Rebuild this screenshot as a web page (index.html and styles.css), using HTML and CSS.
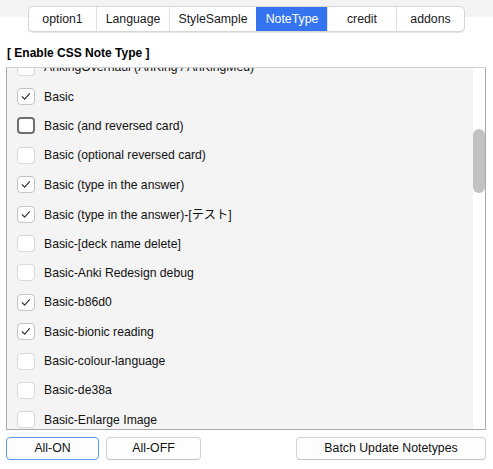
FILE: index.html
```html
<!DOCTYPE html>
<html>
<head>
<meta charset="utf-8">
<link rel="stylesheet" href="styles.css">
</head>
<body>
<div class="header">
  <div class="tabs">
    <div class="tab w1">option1</div>
    <div class="tab w2">Language</div>
    <div class="tab w3">StyleSample</div>
    <div class="tab w4 active">NoteType</div>
    <div class="tab w5">credit</div>
    <div class="tab w6">addons</div>
  </div>
</div>
<div class="title">[ Enable CSS Note Type ]</div>
<div class="listbox">
  <div class="items">
    <div class="inner">
      <div class="row"><span class="cb"></span><span>AnkingOverhaul (AnKing / AnKingMed)</span></div>
      <div class="row"><span class="cb on"><svg viewBox="0 0 18 18"><polyline points="4.5,9.3 7.4,12.2 13.2,5.6"/></svg></span><span>Basic</span></div>
      <div class="row"><span class="cb focus"></span><span>Basic (and reversed card)</span></div>
      <div class="row"><span class="cb"></span><span>Basic (optional reversed card)</span></div>
      <div class="row"><span class="cb on"><svg viewBox="0 0 18 18"><polyline points="4.5,9.3 7.4,12.2 13.2,5.6"/></svg></span><span>Basic (type in the answer)</span></div>
      <div class="row"><span class="cb on"><svg viewBox="0 0 18 18"><polyline points="4.5,9.3 7.4,12.2 13.2,5.6"/></svg></span><span>Basic (type in the answer)-[テスト]</span></div>
      <div class="row"><span class="cb"></span><span>Basic-[deck name delete]</span></div>
      <div class="row"><span class="cb"></span><span>Basic-Anki Redesign debug</span></div>
      <div class="row"><span class="cb on"><svg viewBox="0 0 18 18"><polyline points="4.5,9.3 7.4,12.2 13.2,5.6"/></svg></span><span>Basic-b86d0</span></div>
      <div class="row"><span class="cb on"><svg viewBox="0 0 18 18"><polyline points="4.5,9.3 7.4,12.2 13.2,5.6"/></svg></span><span>Basic-bionic reading</span></div>
      <div class="row"><span class="cb"></span><span>Basic-colour-language</span></div>
      <div class="row"><span class="cb"></span><span>Basic-de38a</span></div>
      <div class="row"><span class="cb"></span><span>Basic-Enlarge Image</span></div>
    </div>
  </div>
  <div class="track"><div class="thumb"></div></div>
</div>
<div class="buttons">
  <button class="btn b-on">All-ON</button>
  <button class="btn b-off">All-OFF</button>
  <span class="spacer"></span>
  <button class="btn b-batch">Batch Update Notetypes</button>
</div>
</body>
</html>
```
FILE: styles.css
```css
html, body {
  margin: 0;
  padding: 0;
  background: #ffffff;
}
body {
  width: 493px;
  height: 469px;
  overflow: hidden;
  font-family: "Liberation Sans", "Noto Sans CJK JP", sans-serif;
  font-size: 12px;
  color: #111111;
}
.header {
  height: 32px;
  padding-top: 6px;
  box-sizing: border-box;
  background: linear-gradient(to bottom, #f3f3f3 0, #f3f3f3 17px, #ffffff 17px);
  display: flex;
  justify-content: flex-start;
  padding-left: 28px;
}
.tabs {
  display: flex;
  height: 26px;
  box-sizing: border-box;
  border: 1px solid #d6d6d6;
  border-radius: 5px;
  background: #ffffff;
  overflow: hidden;
  box-shadow: 0 1px 0 #e4e4e4;
}
.tab {
  display: flex;
  align-items: center;
  justify-content: center;
  border-left: 1px solid #e2e2e2;
  box-sizing: border-box;
  color: #1a1a1a;
  font-size: 12.3px;
}
.tab:first-child { border-left: none; }
.w1 { width: 67px; }
.w2 { width: 73px; }
.w3 { width: 87px; }
.w4 { width: 71px; }
.w5 { width: 69px; }
.w6 { width: 68px; }
.tab.active {
  background: #3574f0;
  color: #ffffff;
  border-left-color: #3574f0;
}
.title {
  padding: 13px 7px 0;
  line-height: 16px;
  font-weight: bold;
  color: #000000;
}
.listbox {
  margin: 6px 0 0 6px;
  width: 480px;
  height: 363px;
  box-sizing: border-box;
  border: 1px solid #a9a9a9;
  border-top-color: #d0d0d0;
  display: flex;
}
.items {
  flex: 1;
  background: #f4f4f4;
  overflow: hidden;
}
.inner {
  margin-top: -15.5px;
}
.row {
  height: 29.4px;
  display: flex;
  align-items: center;
  padding-left: 10px;
  gap: 9px;
  white-space: nowrap;
  font-size: 12.2px;
}
.cb {
  width: 18px;
  height: 17px;
  box-sizing: border-box;
  border: 1px solid #d9d9d9;
  border-radius: 4px;
  background: #ffffff;
  flex: none;
  display: flex;
}
.cb.on {
  border-color: #c4c4c4;
}
.cb.focus {
  border: 2px solid #6e6e6e;
}
.cb svg {
  width: 16px;
  height: 15px;
}
.cb polyline {
  fill: none;
  stroke: #333333;
  stroke-width: 1.4;
  stroke-linecap: round;
  stroke-linejoin: round;
}
.track {
  width: 12px;
  background: #ffffff;
}
.thumb {
  margin-top: 61px;
  height: 64px;
  border-radius: 6px;
  background: #c2c2c2;
}
.buttons {
  display: flex;
  margin: 7px 0 0 6px;
  width: 480px;
  gap: 7px;
}
.spacer { flex: 1; }
.btn {
  height: 23px;
  box-sizing: border-box;
  border: 1px solid #d4d4d4;
  border-bottom-color: #c4c4c4;
  border-radius: 4px;
  background: #fdfdfd;
  font-family: "Liberation Sans", sans-serif;
  font-size: 12.3px;
  line-height: 15px;
  color: #111111;
  padding: 0;
  display: flex;
  align-items: center;
  justify-content: center;
}
.b-on {
  width: 93px;
  border-color: #5b9be6;
}
.b-off { width: 95px; }
.b-batch { width: 190px; }
```
